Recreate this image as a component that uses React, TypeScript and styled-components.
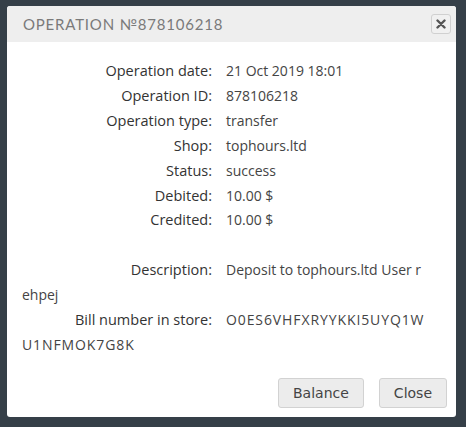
import styled, { createGlobalStyle } from 'styled-components';

const GlobalStyle = createGlobalStyle`
    html, body {
        margin: 0;
        padding: 0;
        background: #353f48;
        width: 466px;
        height: 427px;
        overflow: hidden;
    }
`;

interface Field {
    label: string;
    value: string;
    code?: boolean;
}

const fields: Field[] = [
    { label: 'Operation date:', value: '21 Oct 2019 18:01' },
    { label: 'Operation ID:', value: '878106218' },
    { label: 'Operation type:', value: 'transfer' },
    { label: 'Shop:', value: 'tophours.ltd' },
    { label: 'Status:', value: 'success' },
    { label: 'Debited:', value: '10.00 $' },
    { label: 'Credited:', value: '10.00 $' },
];

const extraFields: Field[] = [
    { label: 'Description:', value: 'Deposit to tophours.ltd User rehpej' },
    { label: 'Bill number in store:', value: 'O0ES6VHFXRYYKKI5UYQ1WU1NFMOK7G8K', code: true },
];

const App = () => {
    return (
        <>
            <GlobalStyle />
            <Overlay>
                <Dialog>
                    <Header>
                        <Title>Operation №878106218</Title>
                        <CloseIcon aria-label='close'>
                            <svg width='10' height='10' viewBox='0 0 10 10'>
                                <path d='M1.5 1.5 L8.5 8.5 M8.5 1.5 L1.5 8.5' stroke='#555' strokeWidth='2.4' strokeLinecap='round' />
                            </svg>
                        </CloseIcon>
                    </Header>
                    <Body>
                        {fields.map((f) => (
                            <Row key={f.label}>
                                <Label>{f.label}</Label>
                                <Value>{f.value}</Value>
                            </Row>
                        ))}
                        <Row>&nbsp;</Row>
                        {extraFields.map((f) => (
                            <Row key={f.label}>
                                <Label>{f.label}</Label>
                                <Value $code={f.code}>{f.value}</Value>
                            </Row>
                        ))}
                    </Body>
                    <Footer>
                        <Button type='button'>Balance</Button>
                        <Button type='button'>Close</Button>
                    </Footer>
                </Dialog>
            </Overlay>
        </>
    );
};

const Overlay = styled.div`
    padding: 6px 10px 0 7px;
`;

const Dialog = styled.div`
    width: 449px;
    height: 411px;
    background: #fff;
    border-radius: 3px;
    display: flex;
    flex-direction: column;
    overflow: hidden;
`;

const Header = styled.div`
    height: 36px;
    background: #eeeeee;
    display: flex;
    align-items: center;
    justify-content: space-between;
    padding: 0 5px 0 16px;
`;

const Title = styled.h2`
    margin: 0;
    font-family: 'Lato', 'Noto Sans', sans-serif;
    font-size: 15px;
    font-weight: 400;
    text-transform: uppercase;
    letter-spacing: 0.8px;
    color: #7a7a7a;
`;

const CloseIcon = styled.button`
    width: 20px;
    height: 20px;
    padding: 0;
    display: flex;
    align-items: center;
    justify-content: center;
    background: #f0f0f0;
    border: 1px solid #d0d0d0;
    border-radius: 3px;
`;

const Body = styled.div`
    flex: 1;
    padding: 17px 28px 0 15px;
    font-family: 'Open Sans', 'Noto Sans', sans-serif;
    font-size: 14px;
    line-height: 24.9px;
    color: #333;
`;

const Row = styled.div`
    word-break: break-all;
`;

const Label = styled.span`
    display: inline-block;
    width: 190px;
    margin-right: 14px;
    text-align: right;
    font-size: 14.5px;
    color: #333;
`;

const Value = styled.span<{ $code?: boolean }>`
    color: #444;
    letter-spacing: ${(p) => (p.$code ? '0.9px' : '0')};
`;

const Footer = styled.div`
    display: flex;
    justify-content: flex-end;
    gap: 15px;
    padding: 0 9px 9px 0;
`;

const Button = styled.button`
    height: 30px;
    padding: 0 14px;
    font-family: 'DejaVu Sans', Verdana, sans-serif;
    font-size: 14px;
    color: #444;
    background: #ececec;
    border: 1px solid #d2d2d2;
    border-radius: 3px;
`;

export default App;
